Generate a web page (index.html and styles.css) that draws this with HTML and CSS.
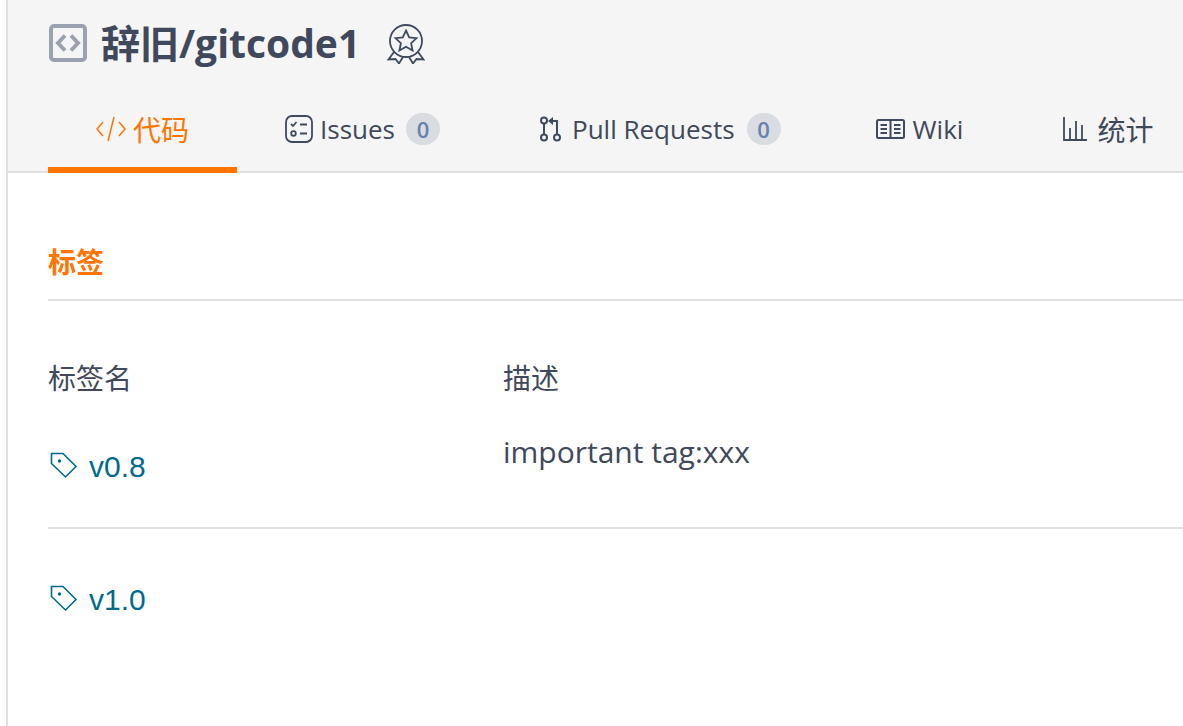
FILE: index.html
```html
<!DOCTYPE html>
<html lang="zh-CN">
<head>
  <meta charset="UTF-8" />
  <title>辞旧/gitcode1 标签</title>
  <link rel="stylesheet" href="styles.css">
</head>
<body>
  <div class="page">
    <header class="repo-header">
      <div class="repo-title">
        <svg class="repo-icon" width="38" height="38" viewBox="0 0 38 38" fill="none">
          <rect x="2" y="2" width="34" height="34" rx="3" stroke="#9aa1b0" stroke-width="4"/>
          <path d="M16 11.500l-7 7.500 7 7.500M22 11.500l7 7.500-7 7.500" stroke="#9aa1b0" stroke-width="4"/>
        </svg>
        <h1>辞旧/gitcode1</h1>
        <svg class="badge-icon" width="38" height="42" viewBox="0 0 38 42" fill="none" stroke="#3f4a5f" stroke-width="1.800">
          <circle cx="19" cy="19" r="16"/>
          <path d="M19 8.500l3.200 6.800 7.300.9-5.400 5 1.500 7.300-6.600-3.700-6.600 3.700 1.500-7.300-5.400-5 7.300-.9z"/>
          <path d="M7 30L1.500 37.500l7-.5 3.500 4.500 4-6.500M31 30l5.500 7.500-7-.5-3.500 4.500-4-6.500"/>
        </svg>
      </div>
      <nav class="tabs">
        <a class="tab active tab-code">
          <svg width="30" height="28" viewBox="0 0 30 28" fill="none" stroke="#ff7500" stroke-width="1.500">
            <path d="M7 7l-6 7 6 7M23 7l6 7-6 7M18 2l-6 24"/>
          </svg>
          <span class="cjk">代码</span>
        </a>
        <a class="tab tab-issues">
          <svg width="28" height="28" viewBox="0 0 28 28" fill="none" stroke="#3f4a5f" stroke-width="1.800">
            <rect x="1" y="1" width="26" height="26" rx="6"/>
            <path d="M6 9l2 2 3.500-4M15 9.500h7M15 18.500h7"/>
            <circle cx="8.500" cy="18.500" r="2.300"/>
          </svg>
          Issues <span class="count">0</span>
        </a>
        <a class="tab tab-pulls">
          <svg width="24" height="26" viewBox="0 0 24 26" fill="none" stroke="#3f4a5f" stroke-width="2">
            <circle cx="6" cy="4.500" r="3"/>
            <circle cx="6" cy="21.500" r="3"/>
            <circle cx="19" cy="21.500" r="3"/>
            <path d="M6 7.500v11M19 18.500V5h-7"/>
            <path d="M15 1l-5 4 5 4z" fill="#3f4a5f" stroke="none"/>
          </svg>
          Pull Requests <span class="count">0</span>
        </a>
        <a class="tab tab-wiki">
          <svg width="29" height="22" viewBox="0 0 29 22" fill="none" stroke="#3f4a5f" stroke-width="2">
            <rect x="1" y="2" width="27" height="18" rx="1.500"/>
            <path d="M14.500 2v18M4.500 7H11M4.500 11H11M4.500 15H11M18 7h6.500M18 11h6.500M18 15h6.500"/>
          </svg>
          Wiki
        </a>
        <a class="tab tab-stats">
          <svg width="26" height="26" viewBox="0 0 26 26" fill="none" stroke="#3f4a5f" stroke-width="1.800">
            <path d="M2 1v23h23M8 12v12M14 5v19M20 9v15"/>
          </svg>
          <span class="cjk">统计</span>
        </a>
      </nav>
    </header>

    <main class="content">
      <h2 class="section-title">标签</h2>
      <div class="tag-head">
        <span class="col-name">标签名</span>
        <span>描述</span>
      </div>
      <div class="tag-row first">
        <a class="tag-name">
          <svg width="30" height="30" viewBox="0 0 30 30" fill="none" stroke="#006a8e" stroke-width="1.600">
            <path d="M2.500 2.500h11.500l13 13-10.500 10.500-14-13.500z"/>
            <circle cx="10.500" cy="10" r="1.700" fill="#006a8e" stroke="none"/>
          </svg>
          v0.8
        </a>
        <p class="tag-desc">important tag:xxx</p>
      </div>
      <div class="tag-row">
        <a class="tag-name">
          <svg width="30" height="30" viewBox="0 0 30 30" fill="none" stroke="#006a8e" stroke-width="1.600">
            <path d="M2.500 2.500h11.500l13 13-10.500 10.500-14-13.500z"/>
            <circle cx="10.500" cy="10" r="1.700" fill="#006a8e" stroke="none"/>
          </svg>
          v1.0
        </a>
      </div>
    </main>
  </div>
</body>
</html>
```

FILE: styles.css
```css
* { box-sizing: border-box; }

html, body { height: 100%; }

body {
  margin: 0;
  overflow: hidden;
  background: #fff;
  color: #40485b;
  font-family: "Open Sans", "Noto Sans CJK SC", sans-serif;
}

.page {
  margin-left: 6px;
  height: 100%;
  border-left: 2px solid #e0e0e0;
}

.repo-header {
  height: 173px;
  padding-left: 40px;
  background: #f5f5f5;
  border-bottom: 2px solid #e0e0e0;
}

.repo-title {
  display: flex;
  align-items: center;
  height: 85px;
  color: #40485b;
}

.repo-title h1 {
  margin: 0 27px 0 14px;
  font-size: 39px;
  font-weight: 700;
  line-height: 85px;
}

.repo-icon { margin-left: 1px; }
.badge-icon { margin-top: 0; }

.tabs {
  display: flex;
  height: 86px;
}

.tab {
  display: flex;
  align-items: center;
  gap: 7px;
  height: 88px;
  font-size: 26px;
}

.tab.active {
  padding-top: 6px;
  color: #ff7500;
  border-bottom: 6px solid #ff7500;
}

.cjk { font-size: 28px; }

.tab-code { width: 189px; justify-content: center; }
.tab-issues { margin-left: 48px; }
.tab-pulls { margin-left: 98px; gap: 10px; }
.tab-pulls .count { margin-left: 2px; }
.tab-wiki { margin-left: 95px; gap: 8px; }
.tab-stats { margin-left: 99px; gap: 9px; }

.count {
  display: inline-block;
  width: 34px;
  height: 32px;
  margin-left: 4px;
  border-radius: 16px;
  background: #d9dce1;
  color: #6a80ad;
  font-size: 22px;
  font-weight: 600;
  line-height: 32px;
  text-align: center;
}

.content { padding-left: 40px; }

.section-title {
  margin: 0;
  height: 128px;
  padding-top: 67px;
  border-bottom: 2px solid #e0e0e0;
  color: #ff7500;
  font-size: 28px;
  font-weight: 700;
  line-height: 44px;
}

.tag-head {
  display: flex;
  padding-top: 55px;
  font-size: 28px;
  line-height: 44px;
}

.col-name { width: 455px; }

.tag-row {
  display: flex;
  height: 132px;
  padding-top: 49px;
}

.tag-row.first {
  height: 129px;
  padding-top: 45px;
  border-bottom: 2px solid #e0e0e0;
}

.tag-name {
  display: flex;
  align-items: flex-start;
  gap: 10px;
  width: 455px;
  color: #006a8e;
  font-family: "Liberation Sans", sans-serif;
  font-size: 30px;
  line-height: 44px;
}

.tag-name svg { margin-top: 6px; margin-left: 1px; }

.tag-desc {
  margin: -15px 0 0;
  font-size: 30px;
  line-height: 44px;
}
```
